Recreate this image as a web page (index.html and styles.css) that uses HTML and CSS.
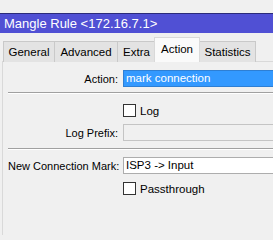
FILE: index.html
```html
<!DOCTYPE html>
<html>
<head>
    <meta name="viewport" content="width=device-width, initial-scale=1.0">
    <link rel="stylesheet" href="styles.css">
</head>
<body>
    <div class="window">
        <div class="titlebar">Mangle Rule &lt;172.16.7.1&gt;</div>
        <div class="tabs">
            <div class="tab tab-general">General</div>
            <div class="tab tab-advanced">Advanced</div>
            <div class="tab tab-extra">Extra</div>
            <div class="tab tab-action active">Action</div>
            <div class="tab tab-stats">Statistics</div>
        </div>
        <div class="panel">
            <div class="row row-action">
                <label class="label">Action:</label>
                <div class="field select">mark connection</div>
            </div>
            <div class="separator"></div>
            <div class="row row-check">
                <span class="label"></span>
                <div class="check"><span class="box"></span>Log</div>
            </div>
            <div class="row row-prefix">
                <label class="label">Log Prefix:</label>
                <div class="field disabled"></div>
            </div>
            <div class="separator"></div>
            <div class="row row-mark">
                <label class="label">New Connection Mark:</label>
                <div class="field">ISP3 -&gt; Input</div>
            </div>
            <div class="row row-check2">
                <span class="label"></span>
                <div class="check"><span class="box"></span>Passthrough</div>
            </div>
        </div>
    </div>
</body>
</html>
```

FILE: styles.css
```css
body {
    margin: 0;
    padding: 0;
    background-color: #f0f0f0;
    font-family: "Liberation Sans", Arial, sans-serif;
    font-size: 11.5px;
    color: #000;
    overflow: hidden;
}

.window {
    padding-top: 13px;
    width: 273px;
}

.titlebar {
    height: 20px;
    line-height: 19px;
    background-color: #5050d4;
    border-top: 1px solid #2b2b7a;
    box-sizing: border-box;
    color: #fff;
    font-size: 13px;
    padding-left: 4px;
}

.tabs {
    display: flex;
    align-items: flex-end;
    padding-left: 3px;
    margin-top: 4px;
    height: 25px;
}

.tab {
    height: 21px;
    line-height: 21px;
    text-align: center;
    background-color: #e3e3e3;
    border: 1px solid #c9c9c9;
    border-bottom: none;
    margin-right: -1px;
    box-sizing: border-box;
    white-space: nowrap;
    font-size: 11.5px;
}

.tab-general { width: 52px; }
.tab-advanced { width: 64px; }
.tab-extra { width: 39px; }
.tab-action { width: 46px; }
.tab-stats { width: 57px; }

.tab.active {
    height: 25px;
    line-height: 22px;
    background-color: #fafafa;
    border-color: #d9d9d9;
    position: relative;
    z-index: 1;
    margin: 0 -1px 0 -1px;
}

.panel {
    border-top: 1px solid #d9d9d9;
    border-left: 1px solid #d9d9d9;
    margin-left: 2px;
    margin-top: -1px;
    padding-top: 8px;
    padding-bottom: 40px;
}

.row {
    display: grid;
    grid-template-columns: 110px 1fr;
    column-gap: 5px;
    align-items: center;
    padding-left: 5px;
}

.label {
    text-align: right;
    white-space: nowrap;
    font-size: 11px;
}

.field {
    height: 17px;
    line-height: 15px;
    border: 1px solid #adadad;
    border-right: none;
    background-color: #fff;
    box-sizing: border-box;
    padding-left: 2px;
    white-space: nowrap;
}

.field.select {
    background-color: #3399ff;
    border-color: #2e7fd4;
    color: #fff;
}

.field.disabled {
    background-color: #f0f0f0;
    border-color: #c4c4c4;
}

.separator {
    height: 1px;
    background-color: #a0a0a0;
    border-bottom: 1px solid #fff;
    margin-left: 5px;
}

.row-action {
    margin-bottom: 5px;
}

.row-check {
    margin-top: 10px;
}

.row-prefix {
    margin-top: 7px;
    margin-bottom: 7px;
}

.row-mark {
    margin-top: 7px;
}

.row-check2 {
    margin-top: 8px;
}

.check {
    display: flex;
    align-items: center;
    height: 13px;
}

.box {
    width: 13px;
    height: 13px;
    border: 1px solid #333;
    background-color: #fff;
    box-sizing: border-box;
    margin-right: 4px;
}
```
